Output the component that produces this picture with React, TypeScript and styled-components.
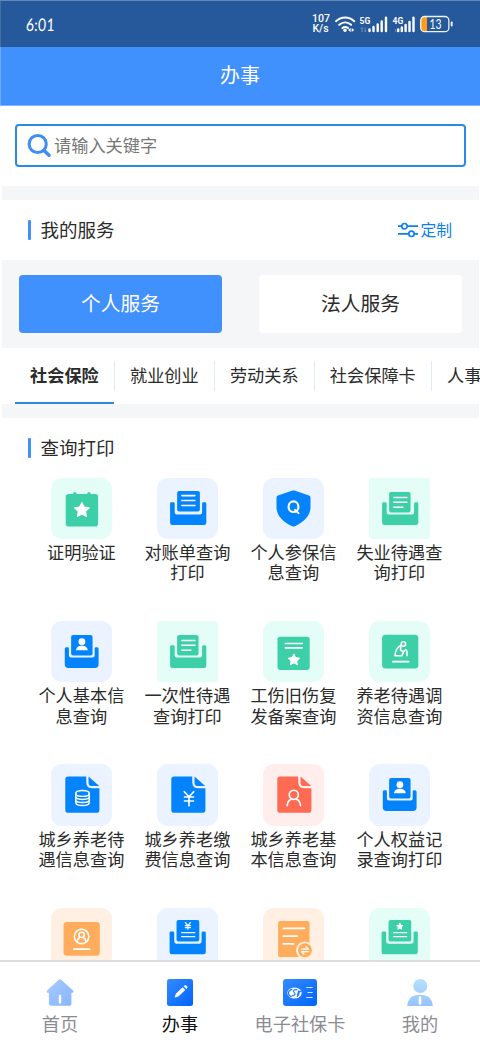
import React from 'react';
import styled, { createGlobalStyle } from 'styled-components';

const GlobalStyle = createGlobalStyle`
  * { box-sizing: border-box; }
  body { margin: 0; background: #fff; }
`;

const BLUE = '#0384fd';
const GREEN = '#3dd0a8';
const ORANGE = '#ffad5c';
const RED = '#fe6b52';

const Screen = styled.div`
  width: 480px;
  height: 1040px;
  overflow: hidden;
  display: flex;
  flex-direction: column;
  background: #fff;
  color: #2b2b2b;
  font-family: 'Noto Sans CJK SC', 'Noto Sans', sans-serif;
`;

const StatusBar = styled.header`
  flex: none;
  height: 47px;
  padding: 0 26px;
  display: flex;
  align-items: center;
  justify-content: space-between;
  background: #25599b;
  border-top: 1px solid #6388b5;
  box-shadow: inset 1px 0 #44709f;
  color: #fff;
`;

const Clock = styled.span`
  font: 400 17.5px/20px Lato, sans-serif;
  transform: scaleX(0.8) skewX(-3deg);
  transform-origin: left;
  letter-spacing: 0.3px;
  padding-top: 1px;
`;

const Indicators = styled.div`
  display: flex;
  align-items: center;
`;

const NetSpeed = styled.div`
  width: 17px;
  font: 500 10.5px/10px Roboto, sans-serif;
  white-space: nowrap;
  text-align: center;
  margin-right: 5px;
`;

const TitleBar = styled.div`
  flex: none;
  height: 59px;
  padding-bottom: 3px;
  display: flex;
  align-items: center;
  justify-content: center;
  background: #4090fe;
  border-bottom: 1px solid #82b6fb;
  box-shadow: inset 1px 0 #6faafb;
  color: #fff;
  font-size: 20px;
`;

const SearchArea = styled.div`
  flex: none;
  height: 80px;
  padding: 18px 14px 0 15px;
`;

const SearchBox = styled.div`
  height: 43px;
  display: flex;
  align-items: center;
  padding-left: 10px;
  gap: 2px;
  border: 2px solid #2b8ae6;
  border-radius: 4px;
  color: #777;
  font-size: 17.2px;

  span { padding-bottom: 2px; }
`;

const Band = styled.div`
  flex: none;
  height: 14px;
  margin: 0 1px 0 2px;
  background: #f5f6f8;
`;

const SectionHead = styled.div`
  flex: none;
  height: 60px;
  padding: 0 28px;
  display: flex;
  align-items: center;
  justify-content: space-between;
`;

const SectionTitle = styled.h2`
  margin: 0;
  display: flex;
  align-items: center;
  gap: 9.5px;
  font-size: 18.5px;
  line-height: 24px;
  font-weight: 400;

  &::before {
    content: '';
    width: 3px;
    height: 20px;
    border-radius: 1px;
    background: #4090f5;
  }

  span { padding-bottom: 3px; }
`;

const Customize = styled.div`
  display: flex;
  align-items: center;
  gap: 1px;
  color: #0b80ee;
  font-size: 15.8px;
  line-height: 22px;
`;

const Switcher = styled.div`
  flex: none;
  height: 88px;
  margin: 0 1px 0 2px;
  padding: 15px 17px;
  display: flex;
  gap: 37px;
  background: #f5f6f8;
`;

const SwitchButton = styled.div<{ $active?: boolean }>`
  flex: 1;
  display: flex;
  align-items: center;
  justify-content: center;
  padding-bottom: 3px;
  border-radius: 4px;
  font-size: 19.8px;
  background: ${(p) => (p.$active ? '#4090fe' : '#fff')};
  color: ${(p) => (p.$active ? '#fff' : '#2b2b2b')};
`;

const Tabs = styled.nav`
  flex: none;
  height: 56px;
  padding-left: 15px;
  display: flex;
  overflow: hidden;
`;

const Tab = styled.div<{ $active?: boolean }>`
  flex: none;
  display: flex;
  align-items: center;
  border-bottom: 2px solid ${(p) => (p.$active ? '#3089dc' : 'transparent')};
  font-size: 17.2px;
  font-weight: ${(p) => (p.$active ? 700 : 400)};

  span {
    padding: 0 15px;
    line-height: 30px;
  }
`;

const Divider = styled.i`
  flex: none;
  width: 1.2px;
  height: 30px;
  margin-top: 13px;
  background: #dfeafa;
`;

const Services = styled.main`
  flex: 1;
  min-height: 0;
  overflow: hidden;
  margin-top: -0.3px;
  padding: 0 28.4px;
  display: grid;
  grid-template-columns: repeat(4, 106px);
  grid-auto-rows: 143.4px;
`;

const Service = styled.div`
  display: flex;
  flex-direction: column;
  align-items: center;
`;

const Tile = styled.div<{ $bg: string; $radius?: number }>`
  flex: none;
  width: 61.4px;
  height: 61.4px;
  border-radius: ${(p) => p.$radius ?? 11}px;
  background: ${(p) => p.$bg};

  svg { display: block; width: 100%; height: 100%; }
`;

const Label = styled.div`
  margin-top: 2.8px;
  font-size: 17.2px;
  line-height: 20.5px;
  display: flex;
  flex-direction: column;
  align-items: center;
`;

const BottomNav = styled.nav`
  flex: none;
  height: 80px;
  display: grid;
  grid-template-columns: repeat(4, 1fr);
  border-top: 2px solid #dcdcdc;
  background: #fff;
`;

const NavItem = styled.div<{ $active?: boolean }>`
  display: flex;
  flex-direction: column;
  align-items: center;
  padding-top: 17px;
  gap: 5px;
  font-size: 18.2px;
  line-height: 24px;
  color: ${(p) => (p.$active ? '#111' : '#8b8b92')};

  svg { flex: none; display: block; }
`;

const starPoints = (cx: number, cy: number, r: number) =>
  Array.from({ length: 10 }, (_, i) => {
    const a = -Math.PI / 2 + (i * Math.PI) / 5;
    const d = i % 2 ? r * 0.5 : r;
    return `${(cx + d * Math.cos(a)).toFixed(2)},${(cy + d * Math.sin(a)).toFixed(2)}`;
  }).join(' ');

const Star = ({ x, y, r }: { x: number; y: number; r: number }) => (
  <polygon points={starPoints(x, y, r)} fill="#fff" stroke="#fff" strokeWidth="1" strokeLinejoin="round" />
);

const Lines = ({ d, w = 1.6 }: { d: string; w?: number }) => (
  <path d={d} fill="none" stroke="#fff" strokeWidth={w} strokeLinecap="round" strokeLinejoin="round" />
);

const Icon = ({ children }: { children: React.ReactNode }) => <svg viewBox="0 0 61 61">{children}</svg>;

type TrayKind = 'wide' | 'text' | 'person' | 'yen' | 'star';

const TrayIcon = ({ color, kind }: { color: string; kind: TrayKind }) => {
  const person = kind === 'person';
  const large = kind === 'yen' || kind === 'star';
  return (
    <Icon>
      {person ? (
        <path fill={color} d="M15 26h1.5q1.3 0 1.3 1.3v6.9q0 2 2 2h21.600q2 0 2-2v-6.900q0-1.300 1.300-1.300h1.100q1.500 0 1.500 1.500v15.400q0 3.700-3.700 3.700H17.400q-3.700 0-3.700-3.700V27.500q0-1.500 1.300-1.500z" />
      ) : (
        <path fill={color} transform={large ? 'translate(-.5 -.8)' : undefined} d="M14.300 24.200h2q1.300 0 1.300 1.300v8.700q0 2 2 2h23.200q2 0 2-2v-8.700q0-1.300 1.300-1.300h1.600q1.300 0 1.300 1.300v19q0 2.300-2.300 2.300H15.200q-2.200 0-2.200-2.300v-19q0-1.300 1.300-1.300z" />
      )}
      <rect fill={color} x={large ? 19.4 : 20} y={large ? 12 : kind === 'wide' ? 13 : 14} width={kind === 'wide' || large ? 22.6 : 21.3} height={large ? 21.2 : 20.2} rx="2" />
      {kind === 'wide' && <Lines d="M24.700 17.500h13M24.700 22.400h13M24.700 27.300h13" />}
      {kind === 'text' && <Lines d="M24.700 19.300h13M24.700 24.200h13M24.700 29h9" w={1.5} />}
      {person && (
        <g fill="#fff">
          <circle cx="30.700" cy="20.600" r="3.400" />
          <path d="M24.800 29.100c.4-3.200 2.900-4.600 5.900-4.600s5.500 1.400 5.900 4.600z" />
        </g>
      )}
      {large && <Lines d="M24.500 24.400h13M24.500 28.400h13" w={1.3} />}
      {kind === 'yen' && <Lines d="M28.200 14.500l2.500 3 2.500-3M30.700 17.500v3.600M28.100 17.500h5.200M28.100 19.400h5.200" w={1.2} />}
      {kind === 'star' && <Star x={30.6} y={18.3} r={3.1} />}
    </Icon>
  );
};

const FoldedDoc = ({ color, children }: { color: string; children: React.ReactNode }) => (
  <Icon>
    <path fill={color} d="M17 12.300h18v5.500q0 6.400 6.500 6.400h6.600v21.500q0 2.800-2.800 2.800H17q-2.800 0-2.800-2.800V15.100q0-2.800 2.800-2.800z" />
    <path fill={color} d="M37.300 12.500l10.600 9.400h-7q-3.600 0-3.600-3.600z" />
    {children}
  </Icon>
);

const CalendarIcon = () => (
  <Icon>
    <path fill={GREEN} d="M17.400 15.800h4.400q.4-1.800 1.900-1.800t1.900 1.800h10.200q.4-1.800 1.900-1.800t1.900 1.800h4.400q2.800 0 2.800 2.800v26.900q0 2.800-2.800 2.800H17.400q-2.800 0-2.800-2.800V18.600q0-2.800 2.800-2.800z" />
    <Star x={30.7} y={32} r={7.7} />
  </Icon>
);

const ShieldIcon = () => (
  <Icon>
    <path fill={BLUE} d="M29.300 12.500q1-.4 2 0l14.400 5q1.500.5 1.500 2.100v9.200c0 8.300-5.700 14.400-15.500 19.100q-1.400.7-2.800 0C19.100 43.200 13.400 37.100 13.400 28.800v-9.200q0-1.600 1.500-2.100z" />
    <ellipse cx="30.300" cy="28.500" rx="4.900" ry="5.300" fill="none" stroke="#fff" strokeWidth="2.200" />
    <Lines d="M31.900 31.700l3.400 3.200" w={2} />
  </Icon>
);

const StarDocIcon = () => (
  <Icon>
    <rect x="14.400" y="15.700" width="32" height="32.900" rx="2.800" fill={GREEN} />
    <Lines d="M22.200 22.300h16.800M22.200 26.700h16.800" />
    <Star x={30.7} y={38.7} r={5.8} />
  </Icon>
);

const ElderIcon = () => (
  <Icon>
    <rect x="13" y="13.700" width="36" height="33.500" rx="3.500" fill={GREEN} />
    <circle cx="34.200" cy="22.900" r="2.200" fill="none" stroke="#fff" strokeWidth="1.500" />
    <Lines d="M31.500 24.200c-3.200 1.900-5.500 5.600-5.700 10.300h6.200M31.700 24.700l-.4 4.100 3.100 1.900-1.800 3.900M34.400 30.200l2.400-1.700.9 1.500v4.600" w={1.5} />
    <Lines d="M23.700 40.400h15.700" w={1.7} />
  </Icon>
);

const CoinsIcon = () => (
  <FoldedDoc color={BLUE}>
    <ellipse cx="31.300" cy="29.300" rx="6.700" ry="2.900" fill="none" stroke="#fff" strokeWidth="1.400" />
    <Lines d="M24.600 29.300v9c0 1.700 3 3 6.700 3s6.700-1.300 6.700-3v-9M24.600 32.400c0 1.600 3 2.800 6.700 2.800s6.700-1.200 6.700-2.800M24.600 35.500c0 1.600 3 2.800 6.700 2.800s6.700-1.200 6.700-2.800" w={1.4} />
  </FoldedDoc>
);

const YenIcon = () => (
  <FoldedDoc color={BLUE}>
    <Lines d="M27.100 27.500l4.700 5.100 4.700-5.100M31.800 32.600v9M27.300 32.800h9M27.300 36.700h9" w={1.6} />
  </FoldedDoc>
);

const RedPersonIcon = () => (
  <FoldedDoc color={RED}>
    <circle cx="30.600" cy="30.600" r="4.500" fill="none" stroke="#fff" strokeWidth="1.700" />
    <Lines d="M24.100 41.300c.2-3.500 1.700-5.500 4.100-6.500M33 34.800c2.500 1 4 3 4.200 6.500" w={1.7} />
  </FoldedDoc>
);

const ProfileCardIcon = () => (
  <Icon>
    <rect x="12.500" y="14" width="36" height="33.400" rx="3.300" fill={ORANGE} />
    <circle cx="30.400" cy="28.300" r="7.200" fill="none" stroke="#fff" strokeWidth="1.500" />
    <circle cx="30.400" cy="26.700" r="2.700" fill="none" stroke="#fff" strokeWidth="1.500" />
    <Lines d="M26 33.500c.3-2.300 1.300-3.600 2.700-4.200M32.100 29.300c1.400.6 2.400 1.900 2.700 4.200" w={1.5} />
    <Lines d="M22.700 40.900h15.800" />
  </Icon>
);

const TransferDocIcon = () => (
  <Icon>
    <rect x="15" y="12.800" width="31.200" height="36" rx="2.200" fill={ORANGE} />
    <Lines d="M20.200 20.300h21M20.200 28h13.800M20.200 35.700h10" w={1.7} />
    <circle cx="41.700" cy="42" r="8.800" fill="#fff1e3" />
    <circle cx="41.700" cy="42" r="6.900" fill={ORANGE} />
    <Lines d="M38.200 40.900h7l-2.500-2.400M45.200 43.400h-7l2.500 2.400" w={1.3} />
  </Icon>
);

const PALE_BLUE = '#eaf3ff';
const PALE_GREEN = '#e4fef7';
const PALE_ORANGE = '#fff0e3';
const PALE_RED = '#ffeeeb';

const services: { label: string[]; bg: string; radius?: number; icon: React.ReactNode }[] = [
  { label: ['证明验证'], bg: PALE_GREEN, icon: <CalendarIcon /> },
  { label: ['对账单查询', '打印'], bg: PALE_BLUE, icon: <TrayIcon color={BLUE} kind="wide" /> },
  { label: ['个人参保信', '息查询'], bg: PALE_BLUE, icon: <ShieldIcon /> },
  { label: ['失业待遇查', '询打印'], bg: PALE_GREEN, radius: 4, icon: <TrayIcon color={GREEN} kind="text" /> },
  { label: ['个人基本信', '息查询'], bg: PALE_BLUE, icon: <TrayIcon color={BLUE} kind="person" /> },
  { label: ['一次性待遇', '查询打印'], bg: PALE_GREEN, radius: 4, icon: <TrayIcon color={GREEN} kind="text" /> },
  { label: ['工伤旧伤复', '发备案查询'], bg: PALE_GREEN, icon: <StarDocIcon /> },
  { label: ['养老待遇调', '资信息查询'], bg: PALE_GREEN, icon: <ElderIcon /> },
  { label: ['城乡养老待', '遇信息查询'], bg: PALE_BLUE, icon: <CoinsIcon /> },
  { label: ['城乡养老缴', '费信息查询'], bg: PALE_BLUE, icon: <YenIcon /> },
  { label: ['城乡养老基', '本信息查询'], bg: PALE_RED, icon: <RedPersonIcon /> },
  { label: ['个人权益记', '录查询打印'], bg: PALE_BLUE, icon: <TrayIcon color={BLUE} kind="person" /> },
  { label: [], bg: PALE_ORANGE, icon: <ProfileCardIcon /> },
  { label: [], bg: PALE_BLUE, icon: <TrayIcon color={BLUE} kind="yen" /> },
  { label: [], bg: PALE_ORANGE, icon: <TransferDocIcon /> },
  { label: [], bg: PALE_GREEN, icon: <TrayIcon color={GREEN} kind="star" /> },
];

const tabs = ['社会保险', '就业创业', '劳动关系', '社会保障卡', '人事人才'];

const SignalText = styled.text`
  font: 700 8.5px Roboto, sans-serif;
  fill: #fff;
`;

const BatteryText = styled.text`
  font: 400 13px Lato, sans-serif;
  fill: #fff;
`;

const StatusIcons = () => (
  <svg width="120" height="24" viewBox="334 12 120 24">
    <g fill="none" stroke="#fff" strokeWidth="2" strokeLinecap="round">
      <path d="M336 21.200c5.500-5 12.800-5 18.300 0M339.200 24.800c3.600-3.200 8.300-3.200 11.900 0" />
      <path d="M342.400 28.100c1.700-1.400 3.900-1.400 5.600 0" />
    </g>
    <circle cx="345" cy="30.200" r="1.700" fill="#fff" />
    <path d="M348.100 30l2.600-2v4zM354.300 30l-2.600-2v4z" fill="#fff" />
    <SignalText x="359.500" y="23.600">5G</SignalText>
    <SignalText x="392.500" y="23.600">4G</SignalText>
    <path d="M362 32v-4.500m-1.200 1.400l1.200-1.400M365 27.500V32m1.200-1.400L365 32" stroke="#7192bf" fill="none" />
    <path d="M395.700 32v-3" stroke="#7192bf" />
    <path d="M369.500 31v-1.500M373.500 31v-4M377.700 31v-6.500M381.700 31v-9.500M386 31V17.800M398.200 31v-1.500M401.800 31v-3.500M405.600 31v-6M409.500 31v-9M413.500 31V17.800" stroke="#fff" strokeWidth="2.400" strokeLinecap="round" />
    <path d="M424 16.500h3v15h-3q-3.200 0-3.200-3.200v-8.600q0-3.200 3.200-3.200z" fill="#ff9b16" />
    <rect x="420.700" y="16.500" width="28.200" height="15.200" rx="4" fill="none" stroke="#eef3fb" strokeWidth="1.300" />
    <path d="M451.700 22.500v3" stroke="#fff" strokeWidth="1.800" strokeLinecap="round" />
    <BatteryText x="429.500" y="28.600" textLength="12" lengthAdjust="spacingAndGlyphs">13</BatteryText>
  </svg>
);

const HomeIcon = () => (
  <svg width="28" height="27" viewBox="0 0 28 27">
    <defs><linearGradient id="home" x2="1" y2="1"><stop stopColor="#a9caff" /><stop offset="1" stopColor="#85b5ff" /></linearGradient></defs>
    <path d="M12.700.7q1.300-1 2.600 0L27 11.500q1.200 1.700-.7 2.200h-.9v11q0 2-2 2H4.900q-2 0-2-2v-11H1.800Q-.1 13.200 1.100 11.500z" fill="url(#home)" />
    <path d="M14 17v6.500" stroke="#fff" strokeWidth="2.500" strokeLinecap="round" />
  </svg>
);

const PencilIcon = () => (
  <svg width="26" height="27" viewBox="0 0 26 27">
    <defs><linearGradient id="pencil" x2="1" y2="1"><stop stopColor="#358bff" /><stop offset="1" stopColor="#0065ff" /></linearGradient></defs>
    <rect width="26" height="27" rx="2.500" fill="url(#pencil)" />
    <path d="M7.600 18.600l1.200-3.900 6.900-6.500 2.600 2.700-6.900 6.500zM16.700 7.300l.9-.9q.8-.7 1.600 0l1 1q.8.800 0 1.600l-.9.900z" fill="#fff" />
  </svg>
);

const CardIcon = () => (
  <svg width="34" height="27" viewBox="0 0 34 27">
    <defs><linearGradient id="card" x2="1" y2="1"><stop stopColor="#358bff" /><stop offset="1" stopColor="#0065ff" /></linearGradient></defs>
    <rect width="34" height="27" rx="3" fill="url(#card)" />
    <ellipse cx="11.500" cy="14" rx="7.200" ry="5.500" fill="#fff" />
    <path d="M9.300 10.400c-5 .8-5 6.500-.5 7.200M14.300 10.800c-3-.8-4.800.9-3.300 2.300 1.800 1.400 1.200 3.700-2 3.400M15.800 11.500l-1.600 6.300M18.300 12.300l-2 .3-.8 4" fill="none" stroke="#1877ff" strokeWidth="1.200" />
    <path d="M23.200 8.500h6.500M24.500 13.500h5.200M23.200 18.500h6.500" stroke="#cfe2ff" strokeWidth="1" />
  </svg>
);

const PersonIcon = () => (
  <svg width="26" height="27" viewBox="0 0 26 27">
    <defs><linearGradient id="person" x2="0" y2="27" gradientUnits="userSpaceOnUse"><stop stopColor="#b5e0ff" /><stop offset="1" stopColor="#98c3ff" /></linearGradient></defs>
    <circle cx="13.300" cy="7" r="7" fill="url(#person)" />
    <path d="M.2 27c.5-7.500 5-11.300 12.800-11.300S25.300 19.500 25.800 27z" fill="url(#person)" />
    <path d="M13 18.500v6" stroke="#fff" strokeWidth="2.500" strokeLinecap="round" />
  </svg>
);

export default function App() {
  return (
    <Screen>
      <GlobalStyle />
      <StatusBar>
        <Clock>6:01</Clock>
        <Indicators>
          <NetSpeed>107<br />K/s</NetSpeed>
          <StatusIcons />
        </Indicators>
      </StatusBar>
      <TitleBar>办事</TitleBar>
      <SearchArea>
        <SearchBox>
          <svg width="25" height="25" viewBox="0 0 25 25" fill="none" stroke="#3e8ef7" strokeWidth="3" strokeLinecap="round">
            <circle cx="10.700" cy="11" r="8.600" />
            <path d="M17 17.500l5 4.700" strokeWidth="3.500" />
          </svg>
          <span>请输入关键字</span>
        </SearchBox>
      </SearchArea>
      <Band />
      <SectionHead>
        <SectionTitle><span>我的服务</span></SectionTitle>
        <Customize>
          <svg width="21" height="16" viewBox="0 0 21 16" fill="none" stroke="currentColor" strokeWidth="1.700">
            <path d="M0 4.200h3.700M9.300 4.200h10.700M0 11.800h10.700M16.300 11.800h3.700" />
            <circle cx="6.500" cy="4.200" r="2.700" />
            <circle cx="13.500" cy="11.800" r="2.700" />
          </svg>
          定制
        </Customize>
      </SectionHead>
      <Switcher>
        <SwitchButton $active>个人服务</SwitchButton>
        <SwitchButton>法人服务</SwitchButton>
      </Switcher>
      <Tabs>
        {tabs.map((t, i) => (
          <React.Fragment key={t}>
            {i > 0 && <Divider />}
            <Tab $active={i === 0}><span>{t}</span></Tab>
          </React.Fragment>
        ))}
      </Tabs>
      <Band />
      <SectionHead>
        <SectionTitle><span>查询打印</span></SectionTitle>
      </SectionHead>
      <Services>
        {services.map((s, i) => (
          <Service key={i}>
            <Tile $bg={s.bg} $radius={s.radius}>{s.icon}</Tile>
            <Label>{s.label.map((line) => <span key={line}>{line}</span>)}</Label>
          </Service>
        ))}
      </Services>
      <BottomNav>
        <NavItem><HomeIcon />首页</NavItem>
        <NavItem $active><PencilIcon />办事</NavItem>
        <NavItem><CardIcon />电子社保卡</NavItem>
        <NavItem><PersonIcon />我的</NavItem>
      </BottomNav>
    </Screen>
  );
}
